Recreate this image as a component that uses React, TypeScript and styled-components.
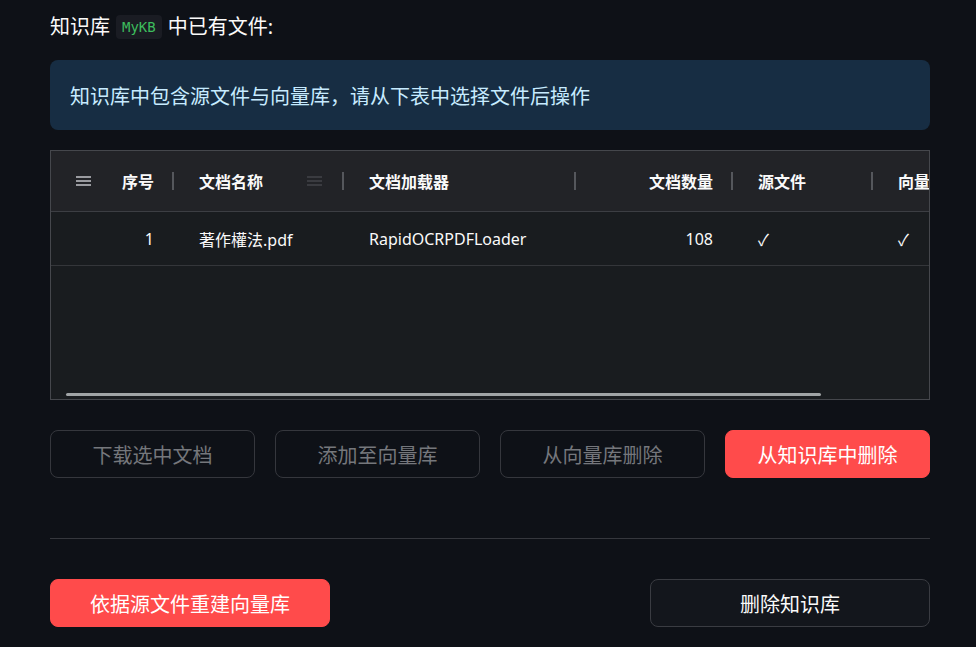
import * as React from 'react';
import styled, { createGlobalStyle } from 'styled-components';

const GlobalStyle = createGlobalStyle`
body {
margin: 0;
background: #0e1117;
color: #fafafa;
font-family: "Noto Sans", "Noto Sans CJK SC", sans-serif;
}
`

interface Column {
    title: string;
    width: number;
    numeric?: boolean;
    menu?: 'solid' | 'faint';
}

const columns: Column[] = [
    { title: '序号', width: 123, numeric: true, menu: 'solid' },
    { title: '文档名称', width: 170, menu: 'faint' },
    { title: '文档加载器', width: 232 },
    { title: '文档数量', width: 157, numeric: true },
    { title: '源文件', width: 140 },
    { title: '向量库', width: 140 },
];

const rows = [
    ['1', '著作權法.pdf', 'RapidOCRPDFLoader', '108', '✓', '✓'],
];

const gridTemplate = columns.map(c => `${c.width}px`).join(' ');

export default function App() {
    return <>
        <GlobalStyle />
        <Page>
            <Title>知识库 <Code>MyKB</Code> 中已有文件:</Title>
            <Info>知识库中包含源文件与向量库，请从下表中选择文件后操作</Info>
            <Grid>
                <Viewport>
                    <HeaderRow style={{ gridTemplateColumns: gridTemplate }}>
                        {columns.map((c, i) => (
                            <HeaderCell key={i} $numeric={c.numeric}>
                                {c.menu && c.numeric && <MenuIcon faint={false} before />}
                                <span>{c.title}</span>
                                {c.menu && !c.numeric && <MenuIcon faint={c.menu === 'faint'} before={false} />}
                                <Resize />
                            </HeaderCell>
                        ))}
                    </HeaderRow>
                    {rows.map((r, ri) => (
                        <BodyRow key={ri} style={{ gridTemplateColumns: gridTemplate }}>
                            {r.map((v, i) => (
                                <BodyCell key={i} $numeric={columns[i].numeric}>{v}</BodyCell>
                            ))}
                        </BodyRow>
                    ))}
                </Viewport>
                <ScrollThumb />
            </Grid>
            <ActionRow>
                <GhostButton>下载选中文档</GhostButton>
                <GhostButton>添加至向量库</GhostButton>
                <GhostButton>从向量库删除</GhostButton>
                <PrimaryButton>从知识库中删除</PrimaryButton>
            </ActionRow>
            <Divider />
            <BottomRow>
                <PrimaryButton $wide>依据源文件重建向量库</PrimaryButton>
                <SecondaryButton>删除知识库</SecondaryButton>
            </BottomRow>
        </Page>
    </>
}

const MenuIcon = ({ faint, before }: { faint: boolean; before: boolean }) => (
    <MenuSvg $faint={faint} $before={before} width="15" height="12" viewBox="0 0 15 12">
        <rect x="0" y="1" width="15" height="2" />
        <rect x="0" y="5" width="15" height="2" />
        <rect x="0" y="9" width="15" height="2" />
    </MenuSvg>
)

const Page = styled.div`
width: 880px;
padding: 8px 46px 0 50px;
display: flex;
flex-direction: column;
`

const Title = styled.div`
font-size: 20px;
line-height: 38px;
height: 38px;
display: flex;
align-items: center;
gap: 6px;
`

const Code = styled.code`
font-family: "DejaVu Sans Mono", "Liberation Mono", monospace;
font-size: 14px;
color: #3dbd5d;
background: #1a1c23;
border-radius: 4px;
padding: 3px 6px;
line-height: 18px;
`

const Info = styled.div`
margin-top: 14px;
height: 70px;
box-sizing: border-box;
padding: 0 20px;
display: flex;
align-items: center;
background: #172d43;
color: #c7ebff;
border-radius: 8px;
font-size: 20px;
`

const Grid = styled.div`
position: relative;
margin-top: 20px;
height: 250px;
box-sizing: border-box;
border: 1px solid #45474c;
background: #191c1f;
overflow: hidden;
`

const Viewport = styled.div`
width: 100%;
overflow: hidden;
`

const HeaderRow = styled.div`
display: grid;
height: 60px;
background: #222327;
border-bottom: 1px solid #3c3e43;
width: max-content;
`

const HeaderCell = styled.div<{ $numeric?: boolean }>`
position: relative;
display: flex;
align-items: center;
justify-content: ${p => p.$numeric ? 'flex-end' : 'flex-start'};
padding: 0 20px 0 25px;
font-size: 16px;
font-weight: 700;
color: #fafafa;
white-space: nowrap;
overflow: hidden;
`

const MenuSvg = styled.svg<{ $faint: boolean; $before: boolean }>`
fill: ${p => p.$faint ? '#3a3b40' : '#9a9ba0'};
flex: none;
margin-left: ${p => p.$before ? '0' : 'auto'};
margin-right: ${p => p.$before ? 'auto' : '2px'};
`

const Resize = styled.div`
position: absolute;
right: 0;
top: 21px;
width: 2px;
height: 18px;
background: #55575c;
`

const BodyRow = styled.div`
display: grid;
height: 53px;
border-bottom: 1px solid #34363a;
width: max-content;
`

const BodyCell = styled.div<{ $numeric?: boolean }>`
display: flex;
align-items: center;
justify-content: ${p => p.$numeric ? 'flex-end' : 'flex-start'};
padding: 0 20px 0 25px;
font-size: 16px;
color: #fafafa;
white-space: nowrap;
overflow: hidden;
`

const ScrollThumb = styled.div`
position: absolute;
left: 15px;
bottom: 3px;
width: 755px;
height: 3px;
border-radius: 2px;
background: #a0a4a6;
`

const ActionRow = styled.div`
margin-top: 30px;
display: grid;
grid-template-columns: repeat(4, 1fr);
gap: 20px;
`

const BaseButton = styled.button`
height: 48px;
border-radius: 8px;
font-family: "Noto Sans CJK SC", sans-serif;
font-size: 20px;
cursor: pointer;
box-sizing: border-box;
`

const GhostButton = styled(BaseButton)`
background: transparent;
border: 1px solid #35373d;
color: #75777c;
`

const PrimaryButton = styled(BaseButton)<{ $wide?: boolean }>`
background: #ff4b4b;
border: 1px solid #ff4b4b;
color: #ffffff;
width: ${p => p.$wide ? '280px' : 'auto'};
`

const SecondaryButton = styled(BaseButton)`
width: 280px;
background: #13161c;
border: 1px solid #3a3c42;
color: #fafafa;
`

const Divider = styled.hr`
margin: 60px 0 0 0;
border: none;
border-top: 1px solid #35373d;
`

const BottomRow = styled.div`
margin-top: 40px;
display: flex;
justify-content: space-between;
`
